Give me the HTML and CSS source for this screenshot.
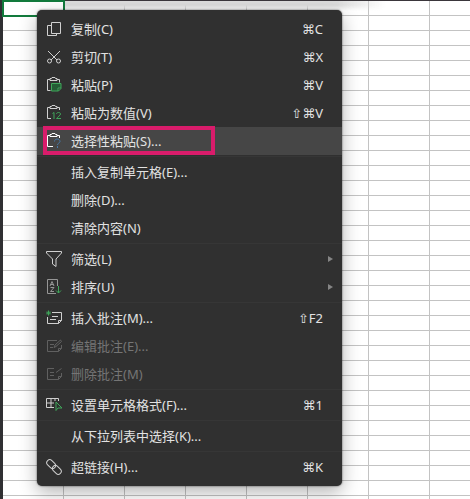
FILE: index.html
```html
<!DOCTYPE html>
<html lang="zh-CN">
<head>
	<meta charset="UTF-8">
	<title>单元格右键菜单</title>
	<link rel="stylesheet" href="styles.css">
</head>
<body>
<div class="sheet">
	<div class="topshade"></div>
	<div class="cell"></div>
</div>
<ul class="menu">
	<li><button class="item">
		<svg class="icon" viewBox="0 0 18 18"><path d="M6.500 2.500h9v11h-9zM6.500 5.500h-4v10h9v-2"/></svg>
		<span class="name">复制(C)</span><span class="key">⌘C</span>
	</button></li>
	<li><button class="item">
		<svg class="icon" viewBox="0 0 18 18"><path d="M3 3l9 9M15 3l-9 9"/><circle cx="4.500" cy="13" r="2"/><circle cx="13.500" cy="13" r="2"/></svg>
		<span class="name">剪切(T)</span><span class="key">⌘X</span>
	</button></li>
	<li><button class="item">
		<svg class="icon" viewBox="0 0 18 18"><path d="M5 3.500H2.500v11h3M12 3.500h2.500v3M5 4.500V2.500h1.500L7 1.500h3l.5 1H12v2z"/><path class="green fill" d="M6.500 7.500h9.500v5l-2.500 2.500h-7zM16 12h-3v3"/></svg>
		<span class="name">粘贴(P)</span><span class="key">⌘V</span>
	</button></li>
	<li><button class="item">
		<svg class="icon" viewBox="0 0 18 18"><path d="M5 3.500H2.500v11H6M12 3.500h2.500v2.500M5 4.500V2.500h1.500L7 1.500h3l.5 1H12v2z"/><path class="green" d="M7.500 9.500l1.500-1V15M11.500 10c0-2 4-2 4 0 0 1.500-3 3-4 4.500h4.500"/></svg>
		<span class="name">粘贴为数值(V)</span><span class="key">⇧⌘V</span>
	</button></li>
	<li class="marked"><button class="item current">
		<svg class="icon" viewBox="0 0 18 18"><path class="bright" d="M5 3.500H2.500v11H8M12 3.500h2.500v2.500M5 4.500V2.500h1.500L7 1.500h3l.5 1H12v2z"/><path class="blue" d="M9.500 9.500c0-3.500 5.500-3 5.500 0 0 1.500-2.500 1.500-2.500 3.500M12.500 14v2"/></svg>
		<span class="name">选择性粘贴(S)...</span>
	</button></li>
	<li class="line"></li>
	<li><button class="item"><span class="icon"></span><span class="name">插入复制单元格(E)...</span></button></li>
	<li><button class="item"><span class="icon"></span><span class="name">删除(D)...</span></button></li>
	<li><button class="item"><span class="icon"></span><span class="name">清除内容(N)</span></button></li>
	<li class="line"></li>
	<li><button class="item">
		<svg class="icon" viewBox="0 0 18 18"><path d="M1.500 1.500h15v1.500L11 9v7.500L7.500 14V9L1.500 3z"/></svg>
		<span class="name">筛选(L)</span><span class="more"></span>
	</button></li>
	<li><button class="item">
		<svg class="icon" viewBox="0 0 18 18"><path class="soft" d="M11 15.500H2.500v-14h10V8M5 8l2-4.500L9 8M5.500 6.500h3M5.500 9.500H9l-3.500 4H9"/><path class="green" d="M13.500 8v7M11 12.500l2.500 2.500 2.500-2.500"/></svg>
		<span class="name">排序(U)</span><span class="more"></span>
	</button></li>
	<li class="line"></li>
	<li><button class="item">
		<svg class="icon" viewBox="0 0 18 18"><path d="M7 3.500h9.500v8l-3 3h-11V8M16.500 11.500h-3v3M7 7.500h6M5 10.500h6"/><path class="green" d="M3.500 1.500v5M1 4h5M2 2.500l3 3M5 2.500l-3 3"/></svg>
		<span class="name">插入批注(M)...</span><span class="key">⇧F2</span>
	</button></li>
	<li><button class="item" disabled>
		<svg class="icon" viewBox="0 0 18 18"><path d="M12 3.500H2.500v11h11l3-3V8M16.500 11.500h-3v3M5 7.500h4M5 10.500h3M9 10.500l1-2.500 5.500-5 1 1.500L11 9.500z"/></svg>
		<span class="name">编辑批注(E)...</span>
	</button></li>
	<li><button class="item" disabled>
		<svg class="icon" viewBox="0 0 18 18"><path d="M9 3.500H2.500v11h11l3-3V8M16.500 11.500h-3v3M5 7.500h4M5 10.500h4M11 7.500l5.500-4"/></svg>
		<span class="name">删除批注(M)</span>
	</button></li>
	<li class="line"></li>
	<li><button class="item">
		<svg class="icon" viewBox="0 0 18 18"><path d="M9 11.500H1.500v-9h12V5M1.500 7H9M6 2.500v9M10 2.500V5"/><path class="green" d="M11 6v8.500l2-2.500h4z"/></svg>
		<span class="name">设置单元格格式(F)...</span><span class="key">⌘1</span>
	</button></li>
	<li class="line"></li>
	<li><button class="item"><span class="icon"></span><span class="name">从下拉列表中选择(K)...</span></button></li>
	<li class="line"></li>
	<li><button class="item">
		<svg class="icon" viewBox="0 0 18 18"><g transform="rotate(45 9 9)"><rect x="0" y="6" width="10" height="6" rx="3"/><rect x="8" y="6" width="10" height="6" rx="3"/></g></svg>
		<span class="name">超链接(H)...</span><span class="key">⌘K</span>
	</button></li>
</ul>
</body>
</html>
```

FILE: styles.css
```css
body{
	display: flow-root;
	position: relative;
	min-height: 100vh;
	margin: 0;
	font: 13px "Noto Sans","Noto Sans CJK SC",sans-serif;
}
ul,li{
	margin: 0;
	padding: 0;
	list-style: none;
}
/* 表格背景 */
.sheet{
	position: absolute;
	inset: 0;
	border-top: 1px solid #3a363b;
	border-left: 3px solid #303033;
	background:
		repeating-linear-gradient(to right, transparent 0 60px, #c3c3c3 60px 61px),
		repeating-linear-gradient(to bottom, #fff 0 14px, #c3c3c3 14px 15px);
}
.topshade{
	height: 10px;
	margin-left: 61px;
	width: 322px;
	background: linear-gradient(to right, #dcdcdc 0 85%, transparent);
	mask-image: linear-gradient(#000 40%, transparent);
}
.cell{
	position: absolute;
	top: -1px;
	left: -1px;
	width: 59px;
	height: 13px;
	border: 2px solid #127a3c;
}
/* 右键菜单 */
.menu{
	position: relative;
	width: 305px;
	margin: 10px 0 0 37px;
	padding: 5px 0;
	box-sizing: border-box;
	border-radius: 5px;
	background: #303030;
	box-shadow: 0 0 2px rgba(0,0,0,.7), 0 6px 18px rgba(0,0,0,.3);
}
.item{
	display: flex;
	align-items: center;
	width: 100%;
	height: 28px;
	padding: 0 19px 0 8px;
	border: 0;
	background: none;
	color: #e2e2e2;
	font: inherit;
	text-align: left;
}
.item:disabled{
	color: #757575;
}
.current{
	background: #464646;
}
.icon{
	width: 18px;
	height: 18px;
	margin-right: 8px;
	fill: none;
	stroke: #d0d0d0;
}
.item:disabled .icon{
	stroke: #606060;
}
.icon .green{
	stroke: #3fa65a;
}
.icon .fill{
	fill: #245c35;
}
.icon .blue{
	stroke: #4779a5;
}
.icon .bright{
	stroke: #fff;
}
.icon .soft{
	stroke: #969696;
}
.name{
	flex: 1;
	padding-bottom: 2px;
}
.key{
	font-family: "Noto Sans","DejaVu Sans",sans-serif;
}
.more{
	margin-right: -10px;
	border: 3px solid transparent;
	border-left: 5px solid #858585;
	border-right: 0;
}
.line{
	height: 1px;
	margin: 1px 0;
	background: #363636;
}
/* 当前项红框 */
.marked{
	position: relative;
}
.marked::after{
	content: "";
	position: absolute;
	top: -1px;
	left: 6px;
	width: 164px;
	height: 21px;
	border: 4px solid #d91c6b;
	pointer-events: none;
}
```
